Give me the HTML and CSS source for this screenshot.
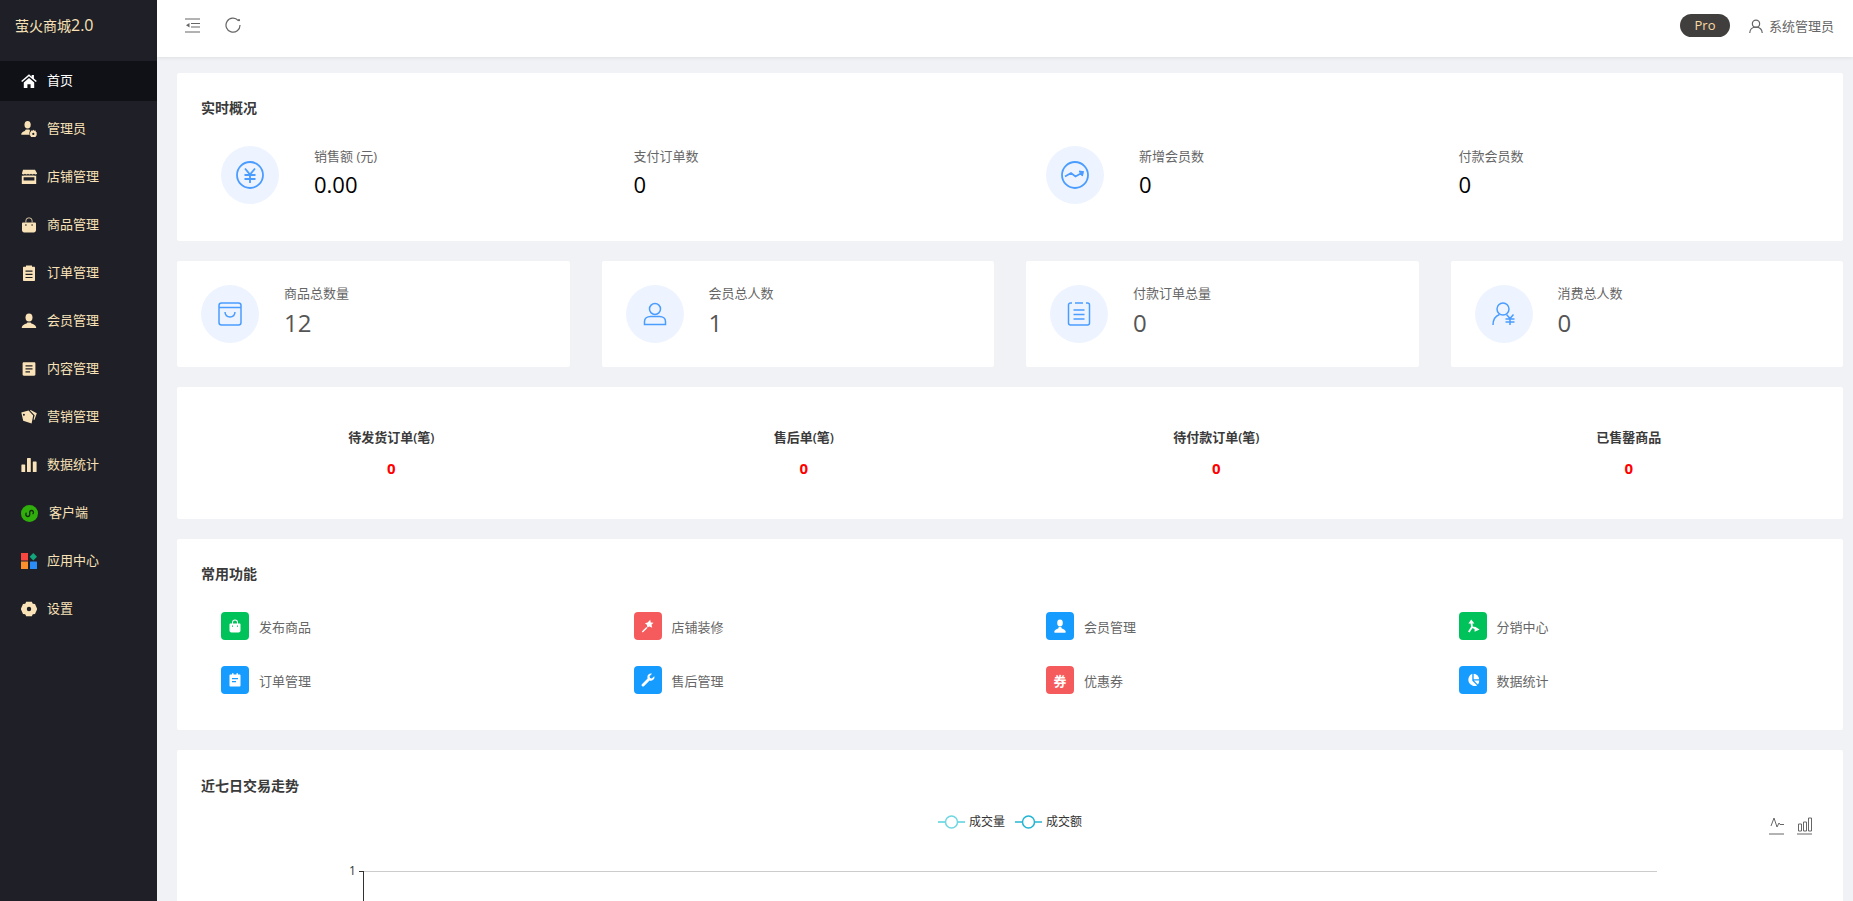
FILE: index.html
```html
<!DOCTYPE html>
<html lang="zh-CN">
  <head>
    <meta charset="UTF-8" />
    <title>萤火商城2.0</title>
    <link rel="stylesheet" href="styles.css">
  </head>
  <body>
    <aside class="sidebar">
      <div class="logo">萤火商城<span class="logo-ver">2.0</span></div>
      <ul class="menu">
        <li class="menu-item active">
          <svg viewBox="0 0 16 16"><path d="M8 1.2.2 8l1 1.1L8 3.3l6.8 5.8 1-1.1-2.9-2.5V2h-2.2v1.7z"/><path d="M2.8 9.4 8 5l5.2 4.4V15H9.6v-3.8H6.4V15H2.8z"/></svg>
          <span>首页</span>
        </li>
        <li class="menu-item">
          <svg viewBox="0 0 16 16"><ellipse cx="6.600" cy="3.800" rx="3.100" ry="3.800"/><path d="M.2 13.800c0-2.300 2-3.200 3.600-3.800l1-1.400h3.600l.6 1.100a4.400 4.400 0 0 0-.4 4.100z"/><path fill-rule="evenodd" d="M12.300 8.800l1 .9 1.300-.1.300 1.300 1.100.8-.6 1.200.6 1.200-1.100.8-.3 1.300-1.300-.1-1 .9-1-.9-1.300.1-.3-1.300-1.100-.8.6-1.200-.6-1.200 1.100-.8.3-1.300 1.300.1zm0 3a1.100 1.100 0 1 0 0 2.200 1.100 1.100 0 0 0 0-2.200z"/></svg>
          <span>管理员</span>
        </li>
        <li class="menu-item">
          <svg viewBox="0 0 16 16"><path d="M2 .8h12l2 3.400v.6c-.8 1-2.200 1-3 0-.7 1-2.300 1-3 0-.7 1-2.300 1-3 0-.7 1-2.300 1-3 0-.8 1-2.200 1-3 0v-.6z"/><path fill-rule="evenodd" d="M.8 6.400c.7.300 1.400.300 2 0h10.400c.6.300 1.300.300 2 0V15H.8zM2.600 8.200v3.400h10.800V8.200z"/></svg>
          <span>店铺管理</span>
        </li>
        <li class="menu-item">
          <svg viewBox="0 0 16 16"><path d="M4.500 5.500V4a3.500 3.500 0 0 1 7 0v1.500h-.8V4a2.700 2.700 0 0 0-5.400 0v1.500z"/><path d="M2.200 5.400h11.600c.7 0 1.200.5 1.200 1.200v6.600c0 1.200-1 2.200-2.200 2.200H3.200C2 15.400 1 14.400 1 13.200V6.600c0-.7.500-1.200 1.200-1.200z"/><circle cx="4.900" cy="8" r=".8" fill="#1f2027"/><circle cx="11.100" cy="8" r=".8" fill="#1f2027"/></svg>
          <span>商品管理</span>
        </li>
        <li class="menu-item">
          <svg viewBox="0 0 16 16"><path fill-rule="evenodd" d="M3 1.800h2V.6h6v1.200h2c.6 0 1 .4 1 1V15c0 .6-.4 1-1 1H3c-.6 0-1-.4-1-1V2.800c0-.6.4-1 1-1zm1.500 3.700v1.200h7V5.500zm0 3.200v1.200h7V8.700zm0 3.200v1.200h7v-1.200z"/></svg>
          <span>订单管理</span>
        </li>
        <li class="menu-item">
          <svg viewBox="0 0 16 16"><ellipse cx="8" cy="4.400" rx="3.500" ry="4"/><path d="M.8 15c0-2.800 2.800-4 4.800-4.600l.8-.8h3.200l.8.800c2 .6 4.800 1.800 4.800 4.600z"/></svg>
          <span>会员管理</span>
        </li>
        <li class="menu-item">
          <svg viewBox="0 0 16 16"><path fill-rule="evenodd" d="M2.800 1.200h10.400c.7 0 1.200.5 1.200 1.200v11.200c0 .7-.5 1.200-1.200 1.200H2.800c-.7 0-1.200-.5-1.200-1.200V2.400c0-.7.500-1.200 1.200-1.200zm1.700 3v1.300h7V4.200zm0 3v1.300h7V7.200zm0 3v1.300h4.500v-1.300z"/></svg>
          <span>内容管理</span>
        </li>
        <li class="menu-item">
          <svg viewBox="0 0 16 16"><path d="M9.600 1 15.800 4.200 13.400 11l-.8-.4 1-4.400L9 1.600z"/><path fill-rule="evenodd" d="M.3 3.600 7.600 1.400l4.600 5-1.600 8.200-8.400-2.800zm2.600 1.100a1 1 0 1 0 0 2 1 1 0 0 0 0-2z"/></svg>
          <span>营销管理</span>
        </li>
        <li class="menu-item">
          <svg viewBox="0 0 16 16"><rect x=".4" y="7.500" width="3.800" height="7.500" rx=".6"/><rect x="6" y="1" width="3.800" height="14" rx=".6"/><rect x="11.800" y="4.500" width="3.800" height="10.500" rx=".6"/></svg>
          <span>数据统计</span>
        </li>
        <li class="menu-item">
          <svg class="menu-icon-round" viewBox="0 0 17 17"><circle cx="8.500" cy="8.500" r="8.500" fill="#2fae0c"/><path d="M5.200 8.200c-1 1.400 0 3.300 1.500 3.300s2-1 2-2V7.500c0-1 .7-2 2-2s2.400 1.700 1.300 3.200" fill="none" stroke="#15290f" stroke-width="1.300" stroke-linecap="round"/></svg>
          <span class="menu-text-shift">客户端</span>
        </li>
        <li class="menu-item">
          <svg viewBox="0 0 16 16"><rect x="0" y="0" width="7" height="7.500" fill="#f9473f"/><rect x="0" y="8.500" width="7" height="7.500" fill="#fb8f2e"/><rect x="9" y="8.500" width="7" height="7.500" rx=".6" fill="#2a8cf6"/><path d="M12.300 0 16 3.700 12.300 7.400 8.600 3.700z" fill="#12a67c"/></svg>
          <span>应用中心</span>
        </li>
        <li class="menu-item">
          <svg viewBox="0 0 16 16"><path fill-rule="evenodd" d="M5.200.8h5.600l1 2 2.200.2 2 4.500v1l-2 4.500-2.200.2-1 2H5.200l-1-2-2.200-.2-2-4.500v-1L2 3l2.200-.2zM8 5.800a2.200 2.200 0 1 0 0 4.400 2.200 2.200 0 0 0 0-4.400z"/></svg>
          <span>设置</span>
        </li>
      </ul>
    </aside>

    <div class="main">
      <header class="topbar">
        <div class="topbar-left">
          <svg class="tool-icon" viewBox="0 0 15 15"><path d="M0 1h15M6 5.500h9M6 9h9M0 14h15" stroke-width="1.200"/><path d="M4.500 5v4.500L1 7.250z" fill="#666" stroke="none"/></svg>
          <svg class="tool-icon reload" viewBox="0 0 16 16"><path d="M13.300 3.600A7 7 0 1 0 15 8" stroke-width="1.200"/><circle cx="14" cy="3.200" r="1.100" fill="#666" stroke="none"/></svg>
        </div>
        <div class="topbar-right">
          <span class="pro">Pro</span>
          <svg class="user-icon" viewBox="0 0 15 15"><circle cx="7.500" cy="5" r="3.900"/><path d="M.8 15c0-3.700 2.700-6.200 6.700-6.200s6.700 2.500 6.700 6.200"/></svg>
          <span class="user-name">系统管理员</span>
        </div>
      </header>

      <div class="content">
        <!-- 实时概况 -->
        <section class="card">
          <div class="card-title">实时概况</div>
          <div class="overview">
            <div class="overview-item">
              <div class="circle">
                <svg viewBox="0 0 28 28"><circle cx="14" cy="14" r="13"/><path d="M9 7.500l5 6 5-6M8.500 14h11M8.500 18h11M14 14v8"/></svg>
              </div>
              <div>
                <div class="label">销售额 (元)</div>
                <div class="value">0.00</div>
              </div>
            </div>
            <div class="overview-item">
              <div>
                <div class="label">支付订单数</div>
                <div class="value">0</div>
              </div>
            </div>
            <div class="overview-item">
              <div class="circle">
                <svg viewBox="0 0 28 28"><circle cx="14" cy="14" r="13"/><path d="M4 15.500l6-3.500 4.500 3.500 7-4M18 10.500l4 .5-1 4" /></svg>
              </div>
              <div>
                <div class="label">新增会员数</div>
                <div class="value">0</div>
              </div>
            </div>
            <div class="overview-item">
              <div>
                <div class="label">付款会员数</div>
                <div class="value">0</div>
              </div>
            </div>
          </div>
        </section>

        <!-- 总量 -->
        <div class="totals">
          <div class="card total-card">
            <div class="circle">
              <svg viewBox="0 0 24 24"><rect x="1" y="1" width="22" height="22" rx="2.500"/><path d="M1 5.500h22M7 10c.3 6.500 9.700 6.500 10 0"/></svg>
            </div>
            <div class="total-text">
              <div class="label">商品总数量</div>
              <div class="total-value">12</div>
            </div>
          </div>
          <div class="card total-card">
            <div class="circle">
              <svg viewBox="0 0 24 24"><circle cx="12" cy="7" r="5.500"/><path d="M7.500 14.500h9c3.500 0 6 2 6 5v3h-21v-3c0-3 2.500-5 6-5z"/></svg>
            </div>
            <div class="total-text">
              <div class="label">会员总人数</div>
              <div class="total-value">1</div>
            </div>
          </div>
          <div class="card total-card">
            <div class="circle">
              <svg viewBox="0 0 24 24"><path d="M5 1H3.500A2 2 0 0 0 1.500 3v18a2 2 0 0 0 2 2h17a2 2 0 0 0 2-2V3a2 2 0 0 0-2-2H19M8 1h8M6.500 8h11M6.500 12.500h11M6.500 17h11"/></svg>
            </div>
            <div class="total-text">
              <div class="label">付款订单总量</div>
              <div class="total-value">0</div>
            </div>
          </div>
          <div class="card total-card">
            <div class="circle">
              <svg viewBox="0 0 24 24"><circle cx="11" cy="7" r="6"/><path d="M1 23c0-5 2.500-9 6.500-10.500M14.500 12.500l3.500 4 3.500-4M13.500 17h9M13.500 20h9M18 17v6"/></svg>
            </div>
            <div class="total-text">
              <div class="label">消费总人数</div>
              <div class="total-value">0</div>
            </div>
          </div>
        </div>

        <!-- 待办 -->
        <section class="card todo">
          <div class="todo-item"><div class="todo-label">待发货订单(笔)</div><div class="todo-value">0</div></div>
          <div class="todo-item"><div class="todo-label">售后单(笔)</div><div class="todo-value">0</div></div>
          <div class="todo-item"><div class="todo-label">待付款订单(笔)</div><div class="todo-value">0</div></div>
          <div class="todo-item"><div class="todo-label">已售罄商品</div><div class="todo-value">0</div></div>
        </section>

        <!-- 常用功能 -->
        <section class="card">
          <div class="card-title">常用功能</div>
          <div class="shortcuts">
            <div class="shortcut">
              <span class="shortcut-icon green"><svg viewBox="0 0 14 14"><path d="M4 5V3.500a3 3 0 0 1 6 0V5H9V3.500a2 2 0 0 0-4 0V5z"/><path fill-rule="evenodd" d="M2.500 4.500h9c.6 0 1 .4 1 1v6c0 1.200-.8 2-2 2h-7c-1.200 0-2-.8-2-2v-6c0-.6.400-1 1-1zM4 6.500v1.200h1V6.500zm5 0v1.200h1V6.500z"/></svg></span>
              <span>发布商品</span>
            </div>
            <div class="shortcut">
              <span class="shortcut-icon red"><svg viewBox="0 0 14 14"><path d="M9.200.8l.6 2.600 2.700.4-2 2 .7 3-2.800-1.400-2.100 1.200-.4-2.800-2-1.600 2.700-.8z"/><path d="M5.400 8 .8 12.600l1 1L6.400 9z"/></svg></span>
              <span>店铺装修</span>
            </div>
            <div class="shortcut">
              <span class="shortcut-icon blue"><svg viewBox="0 0 14 14"><ellipse cx="7" cy="4" rx="2.800" ry="3.400"/><path d="M1.200 13c0-2.200 2.400-3 4-3.600l.6-1.400h2.400l.6 1.400c1.600.6 4 1.400 4 3.600 0 .4-.4.800-.8.800H2c-.4 0-.8-.4-.8-.8z"/></svg></span>
              <span>会员管理</span>
            </div>
            <div class="shortcut">
              <span class="shortcut-icon green"><svg viewBox="0 0 14 14"><path d="M2.800 13 6 8l-.6-4.500M6 8l4 1.600" fill="none" stroke="#fff" stroke-width="1.800"/><path d="M5.200.4 8.400 4.400H2.400zM13.600 10.600l-5 2.200V7.600z"/></svg></span>
              <span>分销中心</span>
            </div>
            <div class="shortcut">
              <span class="shortcut-icon blue"><svg viewBox="0 0 14 14"><path fill-rule="evenodd" d="M2.500 1.500H4V.3h1.500v1.200h3V.3H10v1.200h1.500c.6 0 1 .4 1 1v10c0 .6-.4 1-1 1h-9c-.6 0-1-.4-1-1v-10c0-.6.4-1 1-1zM4 5v1.300h6V5zm0 3v1.300h4V8z"/></svg></span>
              <span>订单管理</span>
            </div>
            <div class="shortcut">
              <span class="shortcut-icon blue"><svg viewBox="0 0 14 14"><path d="M13.300 3.200 10.800 5.500 9 5 8.500 3.200 11 .8C8.800 0 6.300 1.700 6.400 4.200c0 .5.100.9.200 1.300L.9 11.200c-.5.500-.5 1.200 0 1.700l.3.300c.5.500 1.200.500 1.700 0l5.700-5.700c.4.100.8.200 1.300.2 2.500.1 4.200-2.400 3.400-4.500z"/></svg></span>
              <span>售后管理</span>
            </div>
            <div class="shortcut">
              <span class="shortcut-icon red coupon">券</span>
              <span>优惠券</span>
            </div>
            <div class="shortcut">
              <span class="shortcut-icon blue"><svg viewBox="0 0 14 14"><path d="M6.300.8v6.900l4.900 4.900A6.300 6.300 0 1 1 6.300.8z"/><path d="M7.700.8a5.800 5.800 0 0 1 5.500 5.500H7.700z"/><path d="M7.900 7.500h5.400a5.800 5.800 0 0 1-1.500 3.900z"/></svg></span>
              <span>数据统计</span>
            </div>
          </div>
        </section>

        <!-- 近七日交易走势 -->
        <section class="card">
          <div class="card-title chart-title">近七日交易走势</div>
          <svg class="chart" width="1666" height="260">
            <path d="M761 26h27" stroke="#7fdde6" stroke-width="2"/>
            <circle cx="774.500" cy="26" r="6" fill="#fff" stroke="#6fd6e2" stroke-width="1.500"/>
            <text class="chart-text" x="792" y="30">成交量</text>
            <path d="M838 26h27" stroke="#5cc8dc" stroke-width="2"/>
            <circle cx="851.500" cy="26" r="6" fill="#fff" stroke="#22b5d3" stroke-width="1.500"/>
            <text class="chart-text" x="869" y="30">成交额</text>

            <path d="M1592 38h15M1594 30l3-8 3 9 2-4 1 1.500h4" fill="none" stroke="#666"/>
            <path d="M1620 38h15M1621.500 28h3v7h-3zM1626.500 26h3v9h-3zM1631.500 22h3v13h-3z" fill="none" stroke="#666"/>

            <text class="chart-axis" x="172" y="79">1</text>
            <path d="M186 75.500h1294" stroke="#ccc"/>
            <path d="M182 75.500h4M186.500 75v185" stroke="#333"/>
          </svg>
        </section>
      </div>
    </div>
  </body>
</html>
```

FILE: styles.css
```css
html,
body {
  height: 100%;
}
body {
  margin: 0;
  display: flex;
  overflow: hidden;
  background: #f0f2f5;
  color: #333;
  font-family: "Open Sans", "Noto Sans CJK SC", sans-serif;
  font-size: 13px;
}

/* ----- Sidebar ----- */
.sidebar {
  flex: none;
  width: 157px;
  background: #1f2027;
  color: #f9e2b7;
}
.logo {
  height: 61px;
  padding: 14px 0 0 15px;
  box-sizing: border-box;
  font-size: 14px;
  line-height: 22px;
}
.logo-ver {
  font-size: 16px;
}
.menu {
  margin: 0;
  padding: 0;
  list-style: none;
}
.menu-item {
  display: flex;
  align-items: center;
  gap: 10px;
  height: 40px;
  margin-bottom: 8px;
  padding-left: 21px;
  line-height: 20px;
}
.menu-item span {
  padding-bottom: 2px;
}
.menu-item svg {
  width: 16px;
  height: 16px;
  fill: #f9e2b7;
}
.menu-item .menu-icon-round {
  width: 17px;
  height: 17px;
}
.menu-text-shift {
  margin-left: 1px;
}
.menu-item.active {
  background: #101117;
  color: #fff;
}
.menu-item.active svg {
  fill: #fff;
}

/* ----- Top bar ----- */
.main {
  flex: 1;
  min-width: 0;
  display: flex;
  flex-direction: column;
}
.topbar {
  flex: none;
  position: relative;
  display: flex;
  align-items: center;
  justify-content: space-between;
  height: 57px;
  background: #fff;
  box-shadow: 0 1px 4px rgba(0, 21, 41, 0.08);
}
.topbar-left {
  display: flex;
  align-items: center;
  gap: 25px;
  padding: 0 0 7px 28px;
}
.tool-icon {
  width: 15px;
  height: 15px;
  fill: none;
  stroke: #666;
}
.reload {
  width: 16px;
  height: 16px;
}
.topbar-right {
  display: flex;
  align-items: center;
  padding: 0 19px 6px 0;
  color: #666;
}
.pro {
  width: 50px;
  height: 23px;
  border-radius: 12px;
  background: #413f3d;
  color: #f9dca5;
  font-size: 13px;
  line-height: 23px;
  text-align: center;
}
.user-icon {
  width: 14px;
  height: 14px;
  margin: 0 6px 0 19px;
  fill: none;
  stroke: #666;
  stroke-width: 1.3;
}

/* ----- Cards ----- */
.content {
  flex: 1;
  display: flex;
  flex-direction: column;
  gap: 20px;
  padding: 16px 10px 0 20px;
}
.card {
  flex: none;
  background: #fff;
  border-radius: 2px;
}
.card-title {
  height: 46px;
  padding: 24px 24px 0;
  box-sizing: border-box;
  color: #3a3a3a;
  font-size: 14px;
  font-weight: 600;
  line-height: 22px;
}
.chart-title {
  padding-top: 25px;
}

.overview {
  display: grid;
  grid-template-columns: repeat(4, 1fr);
  height: 122px;
  padding: 27px 8px 0;
  box-sizing: border-box;
}
.overview-item {
  display: flex;
  align-items: flex-start;
  gap: 35px;
  padding-left: 36px;
}
.circle {
  flex: none;
  display: flex;
  align-items: center;
  justify-content: center;
  width: 58px;
  height: 58px;
  border-radius: 50%;
  background: #edf4ff;
}
.circle svg {
  width: 28px;
  height: 28px;
  fill: none;
  stroke: #4b9cff;
  stroke-width: 1.8;
}
.total-card .circle svg {
  width: 24px;
  height: 24px;
  stroke-width: 1.5;
}
.label {
  color: #666;
  font-size: 13px;
  line-height: 20px;
}
.value {
  margin-top: 1px;
  color: #000;
  font-size: 22px;
  line-height: 34px;
}

.totals {
  flex: none;
  display: grid;
  grid-template-columns: repeat(4, 1fr);
  gap: 32px;
}
.total-card {
  display: flex;
  align-items: center;
  gap: 25px;
  height: 106px;
  padding: 0 24px;
  box-sizing: border-box;
}
.total-text {
  padding-bottom: 6px;
}
.total-value {
  margin-top: 3px;
  color: #555;
  font-size: 24px;
  line-height: 34px;
}

.todo {
  display: grid;
  grid-template-columns: repeat(4, 1fr);
  height: 132px;
  padding: 40px 8px 0;
  box-sizing: border-box;
  text-align: center;
}
.todo-label {
  color: #3a3a3a;
  font-weight: 600;
  line-height: 20px;
}
.todo-value {
  margin-top: 11px;
  color: #f00;
  font-size: 15px;
  font-weight: 700;
  line-height: 20px;
}

.shortcuts {
  display: grid;
  grid-template-columns: repeat(4, 1fr);
  row-gap: 26px;
  height: 145px;
  padding: 27px 8px 0;
  box-sizing: border-box;
  align-content: start;
}
.shortcut {
  display: flex;
  align-items: center;
  gap: 10px;
  padding-left: 36px;
  color: #666;
}
.shortcut-icon {
  display: flex;
  align-items: center;
  justify-content: center;
  width: 28px;
  height: 28px;
  border-radius: 4px;
  color: #fff;
}
.shortcut-icon svg {
  width: 14px;
  height: 14px;
  fill: #fff;
}
.coupon {
  font-size: 13px;
  font-weight: 700;
}
.green {
  background: #00c25a;
}
.red {
  background: #f55b5d;
}
.blue {
  background: #169bff;
}

.chart {
  display: block;
}
.chart-text {
  fill: #333;
  font-size: 12px;
}
.chart-axis {
  fill: #333;
  font-size: 12px;
}
```
